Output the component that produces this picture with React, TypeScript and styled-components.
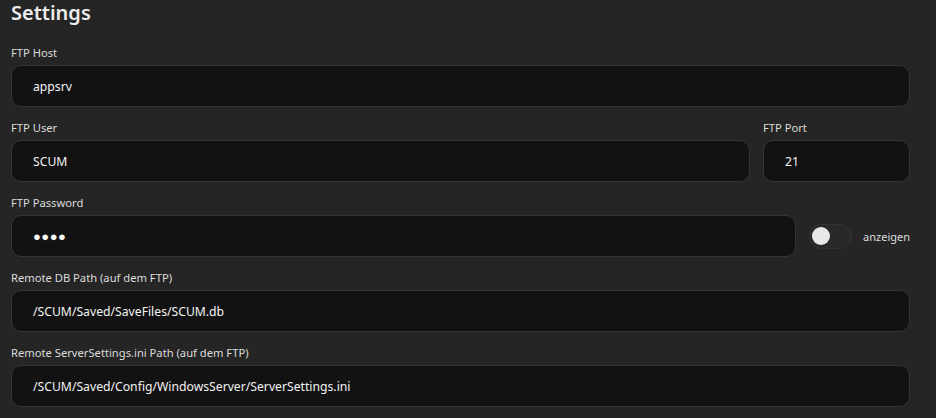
import styled, { createGlobalStyle } from "styled-components"

const GlobalStyle = createGlobalStyle`
  html, body {
    margin: 0;
    padding: 0;
    background: #252525;
    font-family: "Noto Sans", "Open Sans", sans-serif;
    color: #e6e6e6;
  }
`

const App = () => {
  return (
    <>
      <GlobalStyle />
      <Page>
        <Title>Settings</Title>
        <Form>
          <Field>
            <Label>FTP Host</Label>
            <Input>appsrv</Input>
          </Field>
          <Row>
            <Field $grow>
              <Label>FTP User</Label>
              <Input>SCUM</Input>
            </Field>
            <Field $width={147}>
              <Label>FTP Port</Label>
              <Input>21</Input>
            </Field>
          </Row>
          <Field>
            <Label>FTP Password</Label>
            <PasswordRow>
              <Input $grow>
                <Dots>●●●●</Dots>
              </Input>
              <Toggle>
                <Knob />
              </Toggle>
              <ToggleLabel>anzeigen</ToggleLabel>
            </PasswordRow>
          </Field>
          <Field>
            <Label>Remote DB Path (auf dem FTP)</Label>
            <Input>/SCUM/Saved/SaveFiles/SCUM.db</Input>
          </Field>
          <Field>
            <Label>Remote ServerSettings.ini Path (auf dem FTP)</Label>
            <Input>/SCUM/Saved/Config/WindowsServer/ServerSettings.ini</Input>
          </Field>
        </Form>
      </Page>
    </>
  )
}

export default App

const Page = styled.div`
  padding: 0 26px 0 11px;
`

const Title = styled.h2`
  margin: 0 0 19px 0;
  font-size: 20px;
  line-height: 26px;
  font-weight: 600;
  color: #ececec;
`

const Form = styled.div`
  display: flex;
  flex-direction: column;
  gap: 13px;
`

const Row = styled.div`
  display: flex;
  gap: 13px;
`

const Field = styled.div<{ $grow?: boolean; $width?: number }>`
  display: flex;
  flex-direction: column;
  flex: ${p => (p.$grow ? "1" : "none")};
  width: ${p => (p.$width ? `${p.$width}px` : "auto")};
`

const Label = styled.div`
  font-size: 11.2px;
  line-height: 15px;
  margin-bottom: 5px;
  color: #dcdcdc;
`

const Input = styled.div<{ $grow?: boolean }>`
  box-sizing: border-box;
  height: 42px;
  display: flex;
  align-items: center;
  padding: 0 21px;
  background: #121212;
  border: 1px solid #353535;
  border-radius: 10px;
  font-size: 12.2px;
  color: #f2f2f2;
  flex: ${p => (p.$grow ? "1" : "none")};
`

const Dots = styled.span`
  font-size: 13px;
  letter-spacing: 0.5px;
  color: #ffffff;
`

const PasswordRow = styled.div`
  display: flex;
  align-items: center;
`

const Toggle = styled.div`
  box-sizing: border-box;
  width: 43px;
  height: 25px;
  margin-left: 13px;
  border-radius: 13px;
  background: #292929;
  border: 1px solid #333333;
  display: flex;
  align-items: center;
  padding-left: 2px;
`

const Knob = styled.div`
  width: 18px;
  height: 18px;
  border-radius: 50%;
  background: #e8e8e8;
`

const ToggleLabel = styled.span`
  margin-left: 11px;
  font-size: 11px;
  color: #dcdcdc;
`
